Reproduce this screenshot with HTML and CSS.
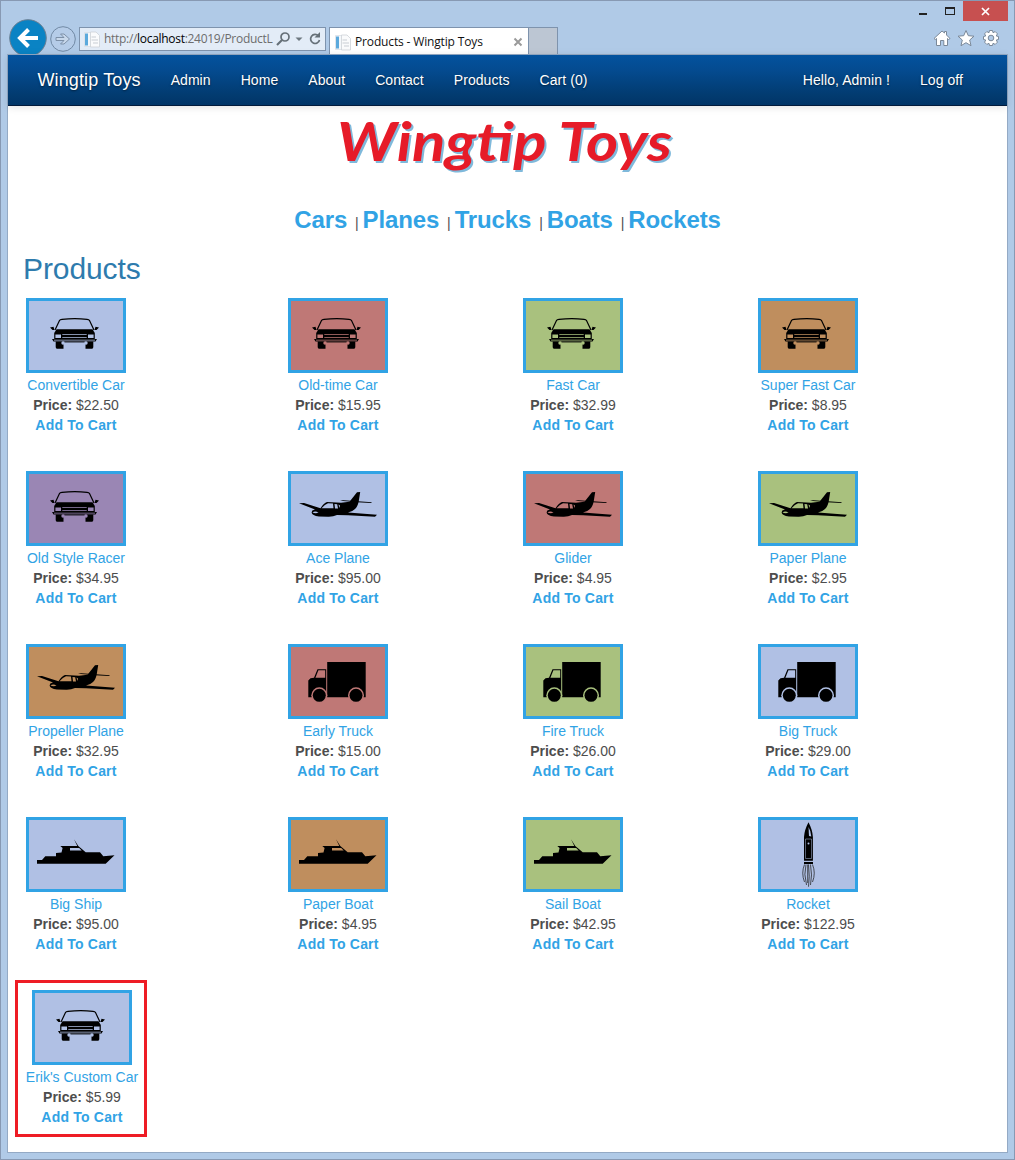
FILE: index.html
```html
<!DOCTYPE html>
<html lang="en">
<head>
<meta charset="utf-8">
<title>Products - Wingtip Toys</title>
<link rel="stylesheet" href="styles.css">
</head>
<body>
<svg class="sprite" width="0" height="0">
  <symbol id="car" viewBox="3 3 94 69">
    <path d="M29 32 33.5 22.5Q34 21.500 36 21.300Q49 20 61 21.300Q63 21.500 63.500 22.500L68 32" fill="none" stroke="#000" stroke-width="1.200"/>
    <path d="M24 29.500 27.500 28.700 28.500 32 26.500 32ZM73 29.500 69.500 28.700 68.500 32 70.500 32Z"/>
    <path d="M30.500 31.300H66.500L68.800 35V41H28.200V35Z"/>
    <path class="cut" d="M29.400 36.500H35V40H29.400ZM62 36.500H67.600V40H62ZM36.300 36.300H60.700V37.100H36.300ZM36.300 39H60.700V39.800H36.300Z"/>
    <path d="M26 41H71L69.500 43.500H27.500Z"/>
    <path class="cut" d="M28 41.700H69V42.400H28Z"/>
    <path d="M29.700 43.500H37.500V50.700H31Q29.700 50.700 29.700 49ZM59.500 43.500H67.300V49Q67.300 50.700 66 50.700H59.500Z"/>
    <circle class="cut" cx="37" cy="45" r="1.700"/><circle class="cut" cx="60" cy="45" r="1.700"/>
    <path d="M38.500 44H58.500" stroke="#000" stroke-width=".8"/>
  </symbol>
  <symbol id="plane" viewBox="3 3 94 69">
    <path d="M11 32.300 16 31.900 32.500 37.200Q36 32 39 31L53 31.700 61.500 30.800 69 21.300 72.200 21 70.700 30.500Q69.500 36 67 38Q64 41 60 41.500L89 43.700 87 45.700 60 44.200 49 44Q45 46 40 45.800L31 45.500Q24 44.500 23.600 41.500L24.300 39.500 27 38.600Z"/>
    <path d="M52 29 84 31.300 83 31.900 69 31.200 55 30Z"/>
    <path class="cut" d="M33.500 37.200Q37 33 40 32.200L45 32.500 45.500 37.200ZM46.500 33 49.200 33.200 50 37.500 47 37.500ZM50.500 33.500 52 34.500 51.500 37Z"/>
    <path class="cut" d="M24.500 41.500Q27 39.500 30.500 41.500L28 42.300 26 42Z"/>
  </symbol>
  <symbol id="truck" viewBox="3 3 94 69">
    <path d="M39.200 18H77.700V53.300H39.200ZM20.300 36.500 22.500 34.200 26 33.700 29.500 25.200H38.200V53.300H20.300Z"/>
    <path class="cut" d="M27.400 33.700 30.400 26.300H37.200V33.700Z"/>
    <circle class="cut" cx="31.300" cy="51.300" r="8"/><circle cx="31.300" cy="51.300" r="6.500"/>
    <circle class="cut" cx="68" cy="51.300" r="8"/><circle cx="68" cy="51.300" r="6.500"/>
  </symbol>
  <symbol id="boat" viewBox="3 3 94 69">
    <path d="M11 43H16L19.300 39.200H30V36L35.500 35.500 36.600 31 34.300 29H51.300L48 22.200 52.300 29 59.700 35.200H74L77.300 39.300 88.500 38.200 79.700 46.800H11Z"/>
    <path class="cut" d="M44 31H53.200L55.700 33.400H44Z"/>
  </symbol>
  <symbol id="rocket" viewBox="3 3 94 69">
    <path d="M50.500 5.300Q54.500 13 54.900 20V43.700H46V20Q46.400 13 50.500 5.300ZM46 45H55V47H46Z"/>
    <path class="cut" d="M50.500 10Q53 14 53.300 19.500L51 19Z"/>
    <path d="M47.500 22H53.500V41.500H47.500Z" fill="none" stroke="#b0c0e4" stroke-width=".5"/>
    <circle class="cut" cx="50.500" cy="26.500" r="1"/>
    <path d="M46.500 47.500Q43 56 46.500 65M48 47.500Q45.500 57 48.500 68M49.700 47.500V66M50.500 47.500Q52 60 50.500 69.700M52.500 47.500Q54.500 58 52.500 68M54.500 47.500Q58 56 54.500 65" fill="none" stroke="#222" stroke-width=".75"/>
  </symbol>
  <symbol id="page" viewBox="0 0 16 17">
    <path d="M.5 1.500H12V15.500H.5Z" fill="#f5f8fb" stroke="#d5dbe2" stroke-width=".7"/>
    <path d="M1 2.500H4V14.500H1Z" fill="#5ba9dc"/>
    <path d="M6.500 1H12L15.500 4.500V16H6.500Z" fill="#fafbfc" stroke="#cdd2d7" stroke-width=".8"/>
    <path d="M7.500 6H12M7.500 9H14M9 12H14" stroke="#c8cdd3"/>
  </symbol>
</svg>
<div class="window">
  <header class="chrome">
    <div class="nav-tools">
      <svg class="back" width="38" height="35" viewBox="0 0 38 35"><circle cx="19" cy="19" r="18.300" fill="#0a83c4" stroke="#6b7f93"/><path d="M19.500 10.500 11 19 19.500 27.500M11.500 19H29" fill="none" stroke="#fff" stroke-width="4"/></svg>
      <svg class="forward" width="26" height="26" viewBox="0 0 26 26"><circle cx="13" cy="13" r="12.300" fill="#b5cce8" stroke="#7189a4"/><path d="M6 11.500H14L10.500 8H14L19.500 13 14 18H10.500L14 14.500H6Z" fill="#c8d8eb" stroke="#7d90a8"/></svg>
      <div class="address">
        <svg width="16" height="17"><use href="#page"/></svg>
        <span class="url">http://<b>localhost</b>:24019/ProductL</span>
        <svg width="50" height="18" viewBox="0 0 50 18"><circle cx="10" cy="7" r="4" fill="none" stroke="#667078" stroke-width="1.700"/><path d="M7 10 2 15" stroke="#667078" stroke-width="2.200"/><path d="M20.500 7.500H27.500L24 11Z" fill="#6e7880"/><path d="M43.500 6A4.500 4.500 0 1 0 44.500 10" fill="none" stroke="#667078" stroke-width="1.700"/><path d="M45 2V7.500H39.500Z" fill="#667078"/></svg>
      </div>
      <div class="tab"><svg width="16" height="17"><use href="#page"/></svg><span>Products - Wingtip Toys</span><svg width="10" height="10" viewBox="0 0 10 10"><path d="M1.500 1.500 8.500 8.500M8.500 1.500 1.500 8.500" stroke="#9a9a9a" stroke-width="2"/></svg></div>
      <div class="new-tab"></div>
    </div>
    <div class="window-tools">
      <div class="buttons">
        <svg width="49" height="20" viewBox="0 0 49 20"><path d="M5 12H13V14H5Z" fill="#222"/><path d="M31 6H41V14H31ZM32 8H40V13H32Z" fill="#222" fill-rule="evenodd"/></svg>
        <div class="close"><svg width="9" height="9" viewBox="0 0 9 9"><path d="M1 1 8 8M8 1 1 8" stroke="#fff" stroke-width="1.700"/></svg></div>
      </div>
      <svg class="toolbar" width="68" height="18" viewBox="0 0 68 18" fill="#fff" stroke="#7a8898" stroke-linejoin="round"><path d="M1 9.500 9 2 11.500 4V2.500H13.500V6L17 9.500 15.500 10.500 14.500 9.500V16.500H10.800V11.500H7.500V16.500H3.500V9.500L2.300 10.500Z"/><path d="M33 1.500 35.300 6.700 41 7.200 36.700 11 38 16.700 33 13.700 28 16.700 29.300 11 25 7.200 30.700 6.700Z"/><g transform="translate(58 9)"><path d="M-1.500-7.500H1.500L2-5.300 4.200-6.400 6.400-4.200 5.300-2 7.500-1.500V1.500L5.300 2 6.400 4.200 4.200 6.400 2 5.300 1.500 7.500H-1.500L-2 5.300-4.200 6.400-6.400 4.200-5.300 2-7.500 1.500V-1.500L-5.300-2-6.400-4.200-4.200-6.400-2-5.300Z"/><circle r="2.800" fill="#b0cae7"/></g></svg>
    </div>
  </header>
  <div class="viewport">
    <nav class="navbar">
      <a class="brand">Wingtip Toys</a><a>Admin</a><a>Home</a><a>About</a><a>Contact</a><a>Products</a><a>Cart (0)</a>
      <span class="account"><a>Hello, Admin !</a><a>Log off</a></span>
    </nav>
    <svg class="logo" width="360" height="68" viewBox="0 0 360 68"><text class="logo-shadow" x="11" y="46" textLength="335" lengthAdjust="spacingAndGlyphs">Wingtip Toys</text><text x="9" y="44" textLength="335" lengthAdjust="spacingAndGlyphs">Wingtip Toys</text></svg>
    <div class="categories"><a>Cars</a> | <a>Planes</a> | <a>Trucks</a> | <a>Boats</a> | <a>Rockets</a></div>
    <h1>Products</h1>
    <main class="products">
      <article><svg class="pic blue"><use href="#car"/></svg><a>Convertible Car</a><p><b>Price:</b> $22.50</p><a class="add">Add To Cart</a></article>
      <article><svg class="pic red"><use href="#car"/></svg><a>Old-time Car</a><p><b>Price:</b> $15.95</p><a class="add">Add To Cart</a></article>
      <article><svg class="pic green"><use href="#car"/></svg><a>Fast Car</a><p><b>Price:</b> $32.99</p><a class="add">Add To Cart</a></article>
      <article><svg class="pic orange"><use href="#car"/></svg><a>Super Fast Car</a><p><b>Price:</b> $8.95</p><a class="add">Add To Cart</a></article>
      <article><svg class="pic purple"><use href="#car"/></svg><a>Old Style Racer</a><p><b>Price:</b> $34.95</p><a class="add">Add To Cart</a></article>
      <article><svg class="pic blue"><use href="#plane"/></svg><a>Ace Plane</a><p><b>Price:</b> $95.00</p><a class="add">Add To Cart</a></article>
      <article><svg class="pic red"><use href="#plane"/></svg><a>Glider</a><p><b>Price:</b> $4.95</p><a class="add">Add To Cart</a></article>
      <article><svg class="pic green"><use href="#plane"/></svg><a>Paper Plane</a><p><b>Price:</b> $2.95</p><a class="add">Add To Cart</a></article>
      <article><svg class="pic orange"><use href="#plane"/></svg><a>Propeller Plane</a><p><b>Price:</b> $32.95</p><a class="add">Add To Cart</a></article>
      <article><svg class="pic red"><use href="#truck"/></svg><a>Early Truck</a><p><b>Price:</b> $15.00</p><a class="add">Add To Cart</a></article>
      <article><svg class="pic green"><use href="#truck"/></svg><a>Fire Truck</a><p><b>Price:</b> $26.00</p><a class="add">Add To Cart</a></article>
      <article><svg class="pic blue"><use href="#truck"/></svg><a>Big Truck</a><p><b>Price:</b> $29.00</p><a class="add">Add To Cart</a></article>
      <article><svg class="pic blue"><use href="#boat"/></svg><a>Big Ship</a><p><b>Price:</b> $95.00</p><a class="add">Add To Cart</a></article>
      <article><svg class="pic orange"><use href="#boat"/></svg><a>Paper Boat</a><p><b>Price:</b> $4.95</p><a class="add">Add To Cart</a></article>
      <article><svg class="pic green"><use href="#boat"/></svg><a>Sail Boat</a><p><b>Price:</b> $42.95</p><a class="add">Add To Cart</a></article>
      <article><svg class="pic blue"><use href="#rocket"/></svg><a>Rocket</a><p><b>Price:</b> $122.95</p><a class="add">Add To Cart</a></article>
      <article class="highlight"><svg class="pic blue"><use href="#car"/></svg><a>Erik's Custom Car</a><p><b>Price:</b> $5.99</p><a class="add">Add To Cart</a></article>
    </main>
  </div>
</div>
</body>
</html>
```
FILE: styles.css
```css
* { box-sizing: border-box; }
body { margin: 0; font: 14px/20px "Liberation Sans", Arial, sans-serif; color: #4d4d4d; }
svg { display: block; flex: none; }
.sprite { position: absolute; }
.window { width: 1015px; height: 1160px; background: #b0cae7; border: 1px solid #8799b3; padding: 0 6px 6px; display: flex; flex-direction: column; }
.chrome { flex: none; height: 53px; display: flex; justify-content: space-between; }
.nav-tools { display: flex; align-items: flex-end; padding-left: 2px; }
.forward { margin: 0 3px 2px 3px; }
.address { width: 247px; height: 24px; margin: 0 3px 3px 0; border: 1px solid #7e93ad; background: #e3ecf7; display: flex; align-items: center; padding-left: 4px; font: 12px/20px "Open Sans", sans-serif; color: #6d6d6d; }
.url { width: 169px; margin: 0 2px 0 4px; white-space: nowrap; letter-spacing: -.3px; }
.url b { font-weight: 400; color: #000; }
.tab { width: 200px; height: 27px; border: 1px solid #7e93ad; border-bottom: 0; background: #fff; display: flex; align-items: center; padding: 2px 5px 0; gap: 4px; font: 12px/20px "Open Sans", sans-serif; color: #111; }
.tab span { flex: 1; white-space: nowrap; letter-spacing: -.15px; }
.new-tab { width: 29px; height: 27px; background: #bcc6d3; border: 1px solid #7e93ad; border-width: 1px 1px 0 0; }
.window-tools { display: flex; flex-direction: column; align-items: flex-end; }
.buttons { display: flex; }
.close { width: 45px; height: 20px; background: #c75050; display: flex; align-items: center; justify-content: center; }
.toolbar { margin: 8px 7px 0 0; }
.viewport { flex: 1; min-height: 0; border: 1px solid #94aac5; background: #fff; }
.navbar { height: 51px; display: flex; align-items: center; padding: 0 44px 0 29.5px; gap: 30px; background: linear-gradient(#03529e, #044b90 30%, #023b70 80%, #013567); border-bottom: 1px solid #021b3c; box-shadow: 0 1px 8px rgba(0,0,0,.12); color: #fff; text-shadow: 0 1px 2px rgba(0,0,0,.5); white-space: nowrap; letter-spacing: .06px; }
.brand { font-size: 18px; letter-spacing: .12px; }
.account { display: flex; gap: 30px; margin-left: auto; }
.logo { margin: 11px 0 0 320px; }
.logo text { font: italic 700 53px Lato, sans-serif; fill: #e61b28; }
.logo .logo-shadow { fill: #7fb9db; }
.categories { margin-top: 20px; height: 30px; line-height: 30px; text-align: center; white-space: pre; }
.categories a { font-size: 24px; font-weight: 700; color: #31a3e5; margin-right: 4px; letter-spacing: -.12px; }
.categories a:last-child { margin: 0; }
h1 { margin: 17px 0 0 15px; height: 33px; font-size: 30px; line-height: 33px; font-weight: 400; color: #2e7bad; letter-spacing: -.1px; }
.products { margin: 13px 0 0 18px; display: grid; grid-template-columns: 262px 235px 235px 100px; grid-template-rows: repeat(4, 173px) auto; align-items: start; }
article { width: 100px; display: flex; flex-direction: column; align-items: center; white-space: nowrap; }
article a { color: #31a3e5; }
article p { margin: 0; }
.add { font-weight: 700; letter-spacing: .2px; }
.pic { width: 100px; height: 75px; border: 3px solid #31a3e5; margin-bottom: 2px; background: var(--tile); }
.cut { fill: var(--tile); }
.blue { --tile: #b0c0e4; }
.red { --tile: #bf7876; }
.green { --tile: #a9c17e; }
.orange { --tile: #bf8e5e; }
.purple { --tile: #9a86b4; }
.highlight { width: 132px; height: 157px; margin: -10px 0 0 -11px; border: 3px solid #ee1c25; padding: 7px 0 0 2px; }
```
